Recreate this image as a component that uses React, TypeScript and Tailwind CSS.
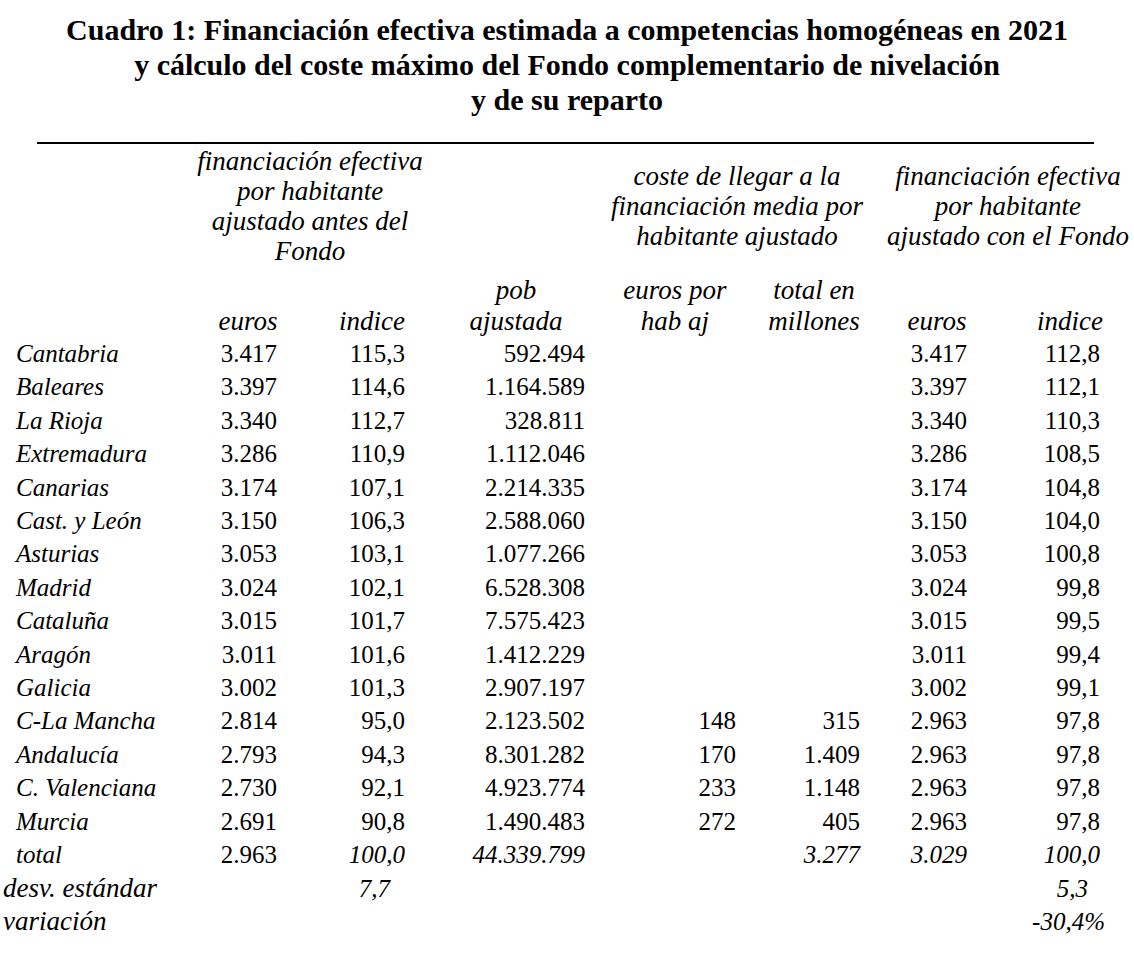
const rows: [string, string, string, string, string, string, string, string][] = [
  ['Cantabria', '3.417', '115,3', '592.494', '', '', '3.417', '112,8'],
  ['Baleares', '3.397', '114,6', '1.164.589', '', '', '3.397', '112,1'],
  ['La Rioja', '3.340', '112,7', '328.811', '', '', '3.340', '110,3'],
  ['Extremadura', '3.286', '110,9', '1.112.046', '', '', '3.286', '108,5'],
  ['Canarias', '3.174', '107,1', '2.214.335', '', '', '3.174', '104,8'],
  ['Cast. y León', '3.150', '106,3', '2.588.060', '', '', '3.150', '104,0'],
  ['Asturias', '3.053', '103,1', '1.077.266', '', '', '3.053', '100,8'],
  ['Madrid', '3.024', '102,1', '6.528.308', '', '', '3.024', '99,8'],
  ['Cataluña', '3.015', '101,7', '7.575.423', '', '', '3.015', '99,5'],
  ['Aragón', '3.011', '101,6', '1.412.229', '', '', '3.011', '99,4'],
  ['Galicia', '3.002', '101,3', '2.907.197', '', '', '3.002', '99,1'],
  ['C-La Mancha', '2.814', '95,0', '2.123.502', '148', '315', '2.963', '97,8'],
  ['Andalucía', '2.793', '94,3', '8.301.282', '170', '1.409', '2.963', '97,8'],
  ['C. Valenciana', '2.730', '92,1', '4.923.774', '233', '1.148', '2.963', '97,8'],
  ['Murcia', '2.691', '90,8', '1.490.483', '272', '405', '2.963', '97,8'],
]

// right padding per numeric column
const pad = ['', 'pr-[3px]', 'pr-[5px]', 'pr-[5px]', 'pr-[14px]', 'pr-[10px]', 'pr-[23px]', 'pr-[34px]']

const grid = 'grid grid-cols-[190px_90px_130px_180px_160px_120px_120px_144px]'

export default function App() {
  return (
    <div className="w-[1134px] h-[957px] bg-white text-black overflow-hidden" style={{ fontFamily: '"Liberation Serif", serif' }}>
      <h1 className="pt-[12px] text-center font-bold text-[30px] leading-[35px]">
        Cuadro 1: Financiación efectiva estimada a competencias homogéneas en 2021
        <br />
        y cálculo del coste máximo del Fondo complementario de nivelación
        <br />
        y de su reparto
      </h1>

      <div className="mt-[25px] ml-[37px] w-[1057px] h-[2px] bg-black" />

      {/* group headers */}
      <div className={`${grid} italic text-[27px] leading-[30px] mt-[2px] h-[120px]`}>
        <div />
        <div className="col-span-2 flex items-center justify-center pl-[20px] text-center whitespace-nowrap">
          <div>
            financiación efectiva
            <br />
            por habitante
            <br />
            ajustado antes del
            <br />
            Fondo
          </div>
        </div>
        <div />
        <div className="col-span-2 flex items-center justify-center pl-[14px] text-center whitespace-nowrap">
          <div>
            coste de llegar a la
            <br />
            financiación media por
            <br />
            habitante ajustado
          </div>
        </div>
        <div className="col-span-2 flex items-center justify-center pl-[12px] text-center whitespace-nowrap">
          <div>
            financiación efectiva
            <br />
            por habitante
            <br />
            ajustado con el Fondo
          </div>
        </div>
      </div>

      {/* column headers */}
      <div className={`${grid} italic text-[27px] leading-[31px] mt-[9px] items-end whitespace-nowrap`}>
        <div />
        <div className="text-center pl-[26px]">euros</div>
        <div className="text-center pl-[54px]">indice</div>
        <div className="text-center pl-[32px]">
          pob
          <br />
          ajustada
        </div>
        <div className="text-center pl-[10px]">
          euros por
          <br />
          hab aj
        </div>
        <div className="text-center pl-[8px]">
          total en
          <br />
          millones
        </div>
        <div className="text-center pl-[14px]">euros</div>
        <div className="text-center pl-[16px]">indice</div>
      </div>

      {/* data */}
      <div className="text-[25px] leading-[33.4px]">
        {rows.map((r) => (
          <div key={r[0]} className={grid}>
            <div className="italic pl-[16px] whitespace-nowrap">{r[0]}</div>
            {r.slice(1).map((v, i) => (
              <div key={i} className={`text-right ${pad[i + 1]}`}>
                {v}
              </div>
            ))}
          </div>
        ))}
        <div className={grid}>
          <div className="italic pl-[16px]">total</div>
          <div className={`text-right ${pad[1]}`}>2.963</div>
          <div className={`text-right italic ${pad[2]}`}>100,0</div>
          <div className={`text-right italic ${pad[3]}`}>44.339.799</div>
          <div />
          <div className={`text-right italic ${pad[5]}`}>3.277</div>
          <div className={`text-right italic ${pad[6]}`}>3.029</div>
          <div className={`text-right italic ${pad[7]}`}>100,0</div>
        </div>
        <div className={`${grid} italic`}>
          <div className="pl-[3px] whitespace-nowrap text-[27px]">desv. estándar</div>
          <div />
          <div className="text-right pr-[20px]">7,7</div>
          <div />
          <div />
          <div />
          <div />
          <div className="text-right pr-[46px]">5,3</div>
        </div>
        <div className={`${grid} italic`}>
          <div className="pl-[3px] text-[27px]">variación</div>
          <div />
          <div />
          <div />
          <div />
          <div />
          <div />
          <div className="text-right pr-[29px]">-30,4%</div>
        </div>
      </div>
    </div>
  )
}
